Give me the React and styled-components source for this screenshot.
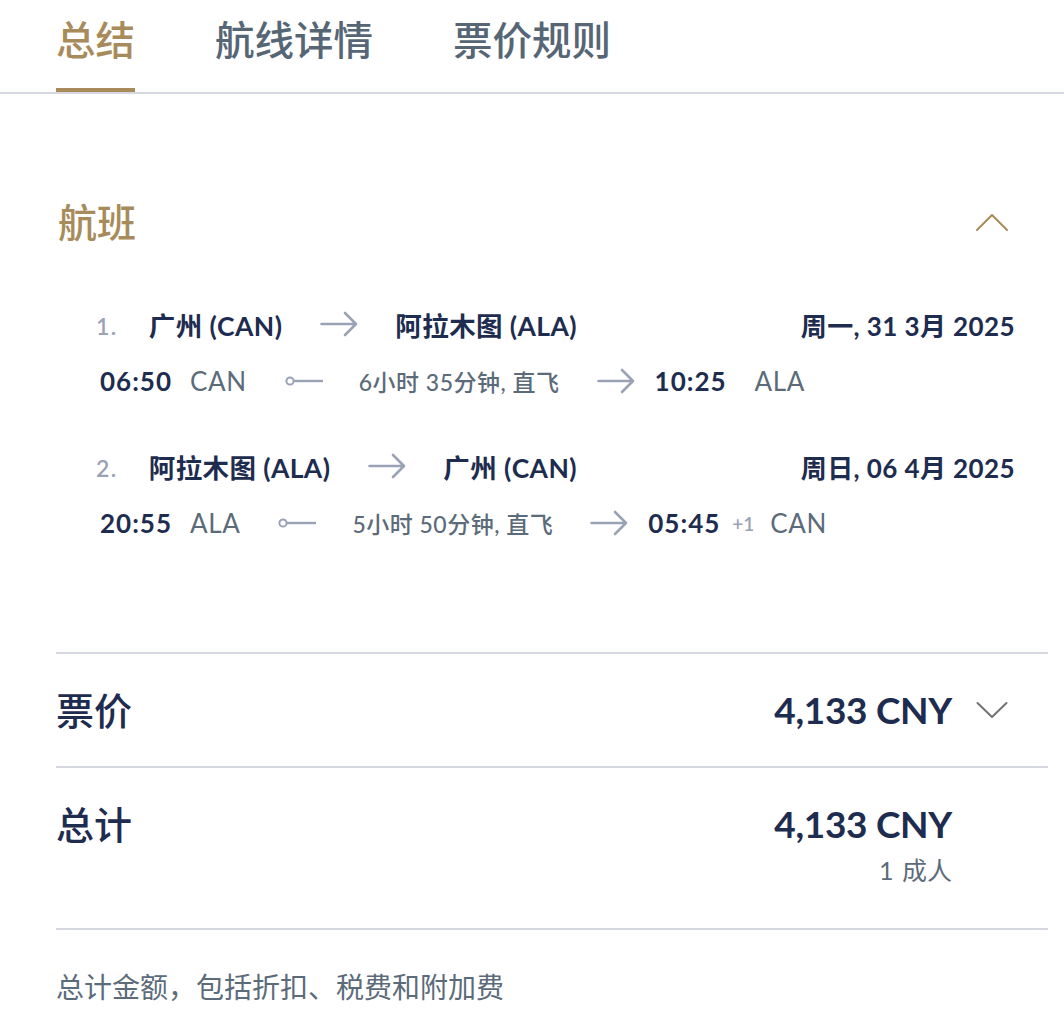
import React, { useState } from 'react';
import styled, { createGlobalStyle } from 'styled-components';

const GlobalStyle = createGlobalStyle`
  body {
    margin: 0;
    background: #ffffff;
    font-family: Lato, "Noto Sans CJK SC", sans-serif;
    color: #1e2c4f;
  }
`;

const gold = '#a88b5b';
const navy = '#1e2c4f';
const slate = '#5c6b7a';
const muted = '#9aa2b6';
const rule = '#d5d8e0';

const Page = styled.div`
  width: 1064px;
  height: 1020px;
  overflow: hidden;
`;

const TabBar = styled.div`
  display: flex;
  gap: 80px;
  padding: 0 56px;
  border-bottom: 2px solid ${rule};
`;

const Tab = styled.div`
  height: 92px;
  box-sizing: border-box;
  padding-top: 12px;
  line-height: 56px;
  font-size: 39.5px;
  font-weight: 500;
  color: ${(p) => (p.$active ? gold : '#566675')};
  border-bottom: 4px solid ${(p) => (p.$active ? gold : 'transparent')};
  cursor: pointer;
`;

const Content = styled.div`
  padding: 0 16px 0 56px;
`;

const SectionHeader = styled.div`
  display: flex;
  align-items: center;
  justify-content: space-between;
  height: 60px;
  margin-top: 98px;
  padding: 0 40px 0 2px;
`;

const SectionTitle = styled.div`
  font-size: 39px;
  font-weight: 500;
  line-height: 60px;
  color: ${gold};
`;

const FlightList = styled.div`
  padding: 52px 33px 0 40px;
  display: flex;
  flex-direction: column;
  gap: 45px;
`;

const Flight = styled.div`
  display: flex;
  flex-direction: column;
  gap: 17px;
`;

const RouteLine = styled.div`
  display: flex;
  align-items: center;
  height: 40px;
  font-size: 26.5px;
  font-weight: 700;
  letter-spacing: 0.4px;
  color: ${navy};
`;

const Index = styled.span`
  color: ${muted};
  font-weight: 600;
  font-size: 23px;
  letter-spacing: 1.5px;
  margin-right: 31px;
  padding-top: 3px;
`;

const City = styled.span`
  white-space: nowrap;
`;

const DateText = styled.span`
  margin-left: auto;
  white-space: nowrap;
  font-size: 26px;
`;

const TimeLine = styled.div`
  display: flex;
  align-items: center;
  height: 40px;
  padding-left: 4px;
`;

const Time = styled.span`
  font-size: 26px;
  font-weight: 700;
  letter-spacing: 1px;
  color: ${navy};
`;

const Code = styled.span`
  font-size: 26px;
  letter-spacing: 0.6px;
  color: ${slate};
  margin-left: ${(p) => p.$gap || 18}px;
`;

const PlusDay = styled.span`
  font-size: 19px;
  font-weight: 600;
  color: ${muted};
  margin-left: 12px;
`;

const Duration = styled.span`
  font-size: 23px;
  font-weight: 500;
  letter-spacing: 0.5px;
  color: ${slate};
  white-space: nowrap;
`;

const Spacer = styled.span`
  display: inline-block;
  flex: none;
  width: ${(p) => p.$w}px;
`;

const Row = styled.div`
  display: flex;
  align-items: flex-start;
  justify-content: space-between;
  border-top: 2px solid ${rule};
  margin-top: ${(p) => p.$top || 0}px;
  padding: ${(p) => p.$pad};
`;

const RowLabel = styled.div`
  font-size: 38px;
  font-weight: 500;
  line-height: 56px;
  color: ${navy};
`;

const RowRight = styled.div`
  display: flex;
  align-items: flex-start;
  gap: 24px;
  padding-right: 40px;
`;

const Amount = styled.div`
  display: flex;
  flex-direction: column;
  align-items: flex-end;
`;

const Price = styled.div`
  font-size: 37px;
  font-weight: 700;
  line-height: 56px;
  color: ${navy};
  letter-spacing: -0.3px;
`;

const Pax = styled.div`
  font-size: 25px;
  line-height: 36px;
  color: ${slate};
  word-spacing: 2px;
`;

const IconSlot = styled.div`
  width: 32px;
  height: 56px;
  display: flex;
  align-items: center;
  justify-content: center;
`;

const Footnote = styled.div`
  border-top: 2px solid ${rule};
  padding-top: 37px;
  font-size: 28px;
  line-height: 40px;
  color: ${slate};
`;

const Chevron = ({ up, color }) => (
  <svg width="32" height="18" viewBox="0 0 32 18" fill="none">
    <path
      d={up ? 'M1 17 L16 2 L31 17' : 'M1.5 2 L16 16 L30.5 2'}
      stroke={color}
      strokeWidth="2"
      strokeLinecap="round"
      strokeLinejoin="round"
    />
  </svg>
);

const Arrow = () => (
  <svg width="38" height="26" viewBox="0 0 38 26" fill="none">
    <path
      d="M1.5 13 H36 M25 2 L36 13 L25 24"
      stroke={muted}
      strokeWidth="2.6"
      strokeLinecap="round"
      strokeLinejoin="round"
    />
  </svg>
);

const Depart = () => (
  <svg width="38" height="12" viewBox="0 0 38 12" fill="none">
    <circle cx="5" cy="6" r="3.6" stroke={muted} strokeWidth="2" />
    <path d="M9 6 H38" stroke={muted} strokeWidth="2.4" />
  </svg>
);

const flights = [
  {
    no: '1.',
    from: '广州 (CAN)',
    to: '阿拉木图 (ALA)',
    date: '周一, 31 3月 2025',
    dep: '06:50',
    depCode: 'CAN',
    duration: '6小时 35分钟, 直飞',
    arr: '10:25',
    arrCode: 'ALA',
    plus: null,
  },
  {
    no: '2.',
    from: '阿拉木图 (ALA)',
    to: '广州 (CAN)',
    date: '周日, 06 4月 2025',
    dep: '20:55',
    depCode: 'ALA',
    duration: '5小时 50分钟, 直飞',
    arr: '05:45',
    arrCode: 'CAN',
    plus: '+1',
  },
];

export default function App() {
  const [tab, setTab] = useState(0);
  const tabs = ['总结', '航线详情', '票价规则'];

  return (
    <Page>
      <GlobalStyle />
      <TabBar>
        {tabs.map((t, i) => (
          <Tab key={t} $active={tab === i} onClick={() => setTab(i)}>
            {t}
          </Tab>
        ))}
      </TabBar>
      <Content>
        <SectionHeader>
          <SectionTitle>航班</SectionTitle>
          <Chevron up color={gold} />
        </SectionHeader>
        <FlightList>
          {flights.map((f) => (
            <Flight key={f.no}>
              <RouteLine>
                <Index>{f.no}</Index>
                <City>{f.from}</City>
                <Spacer $w={38} />
                <Arrow />
                <Spacer $w={37} />
                <City>{f.to}</City>
                <DateText>{f.date}</DateText>
              </RouteLine>
              <TimeLine>
                <Time>{f.dep}</Time>
                <Code>{f.depCode}</Code>
                <Spacer $w={38} />
                <Depart />
                <Spacer $w={36} />
                <Duration>{f.duration}</Duration>
                <Spacer $w={37} />
                <Arrow />
                <Spacer $w={20} />
                <Time>{f.arr}</Time>
                {f.plus && <PlusDay>{f.plus}</PlusDay>}
                <Code $gap={f.plus ? 16 : 28}>{f.arrCode}</Code>
              </TimeLine>
            </Flight>
          ))}
        </FlightList>
        <Row $top={109} $pad="28px 0 28px">
          <RowLabel>票价</RowLabel>
          <RowRight>
            <Price>4,133 CNY</Price>
            <IconSlot>
              <Chevron color="#737373" />
            </IconSlot>
          </RowRight>
        </Row>
        <Row $pad="28px 0 40px">
          <RowLabel>总计</RowLabel>
          <RowRight>
            <Amount>
              <Price>4,133 CNY</Price>
              <Pax>1 成人</Pax>
            </Amount>
            <IconSlot />
          </RowRight>
        </Row>
        <Footnote>总计金额，包括折扣、税费和附加费</Footnote>
      </Content>
    </Page>
  );
}
